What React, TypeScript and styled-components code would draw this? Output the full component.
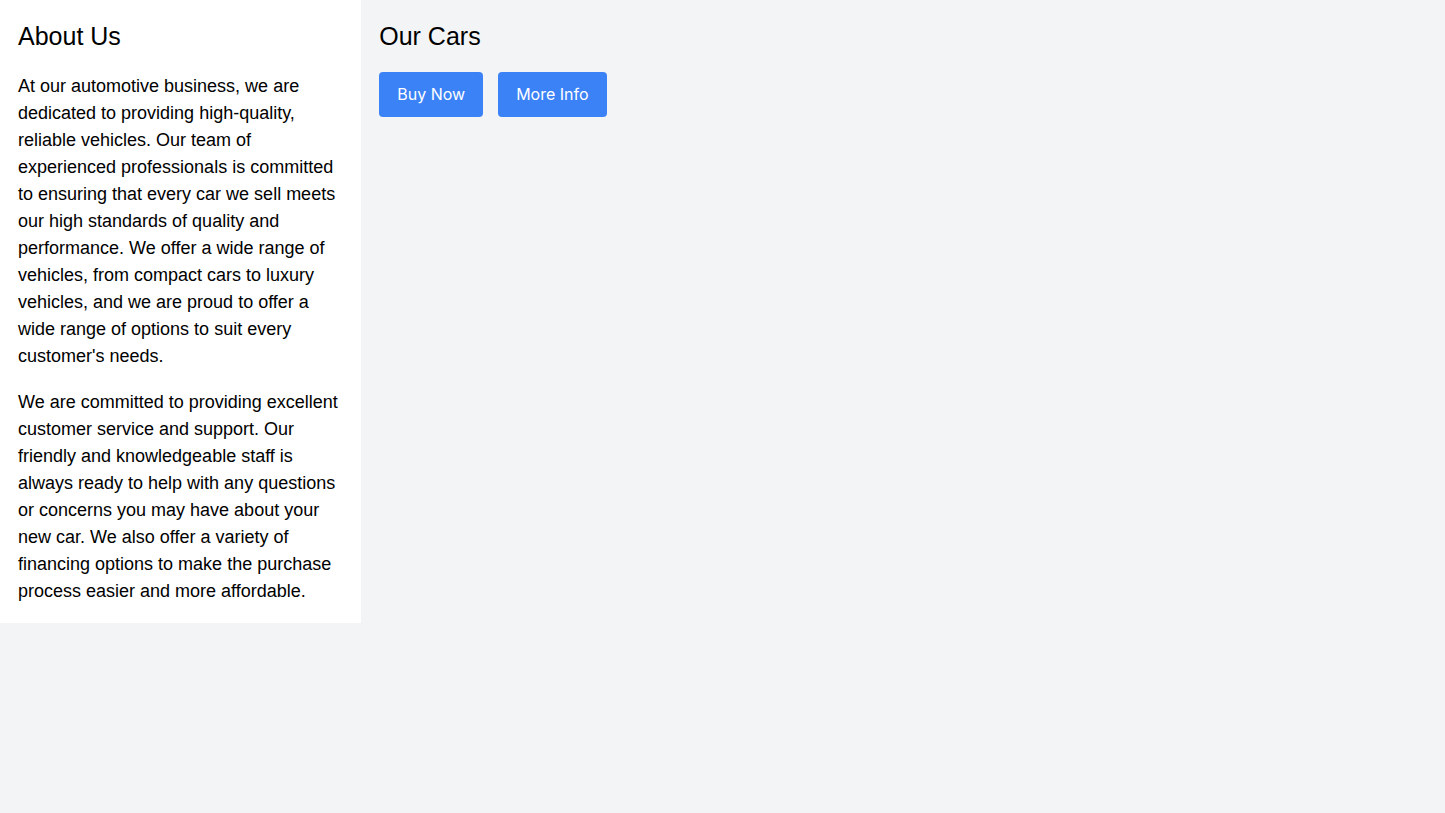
import React from "react";
import styled, { createGlobalStyle } from "styled-components";

const Global = createGlobalStyle`
  html, body { margin: 0; padding: 0; }
  body {
    background: #f3f4f6;
    font-family: "Liberation Sans", Arial, sans-serif;
    color: #000;
  }
`;

const Page = styled.div`
  display: flex;
  align-items: flex-start;
  min-height: 813px;
  background: #f3f4f6;
`;

const Sidebar = styled.aside`
  width: 25%;
  box-sizing: border-box;
  background: #ffffff;
  padding: 18px;
`;

const Main = styled.main`
  flex: 1;
  padding: 18px;
`;

const Heading = styled.h2`
  margin: 0 0 19px;
  font-size: 25px;
  line-height: 36px;
  font-weight: 400;
`;

const Paragraph = styled.p`
  margin: 0 0 19px;
  font-size: 18px;
  line-height: 27px;
  &:last-child { margin-bottom: 0; }
`;

const ButtonRow = styled.div`
  display: flex;
  gap: 15px;
  margin-top: -1px;
`;

const Button = styled.button`
  background: #3b82f6;
  color: #ffffff;
  border: none;
  border-radius: 4px;
  padding: 9px 18px;
  font-family: Inter, "Liberation Sans", sans-serif;
  font-size: 16px;
  line-height: 27px;
  cursor: pointer;
`;

export default function App() {
  return (
    <Page>
      <Global />
      <Sidebar>
        <Heading>About Us</Heading>
        <Paragraph>
          At our automotive business, we are dedicated to providing high-quality, reliable vehicles. Our team of
          experienced professionals is committed to ensuring that every car we sell meets our high standards of
          quality and performance. We offer a wide range of vehicles, from compact cars to luxury vehicles, and we
          are proud to offer a wide range of options to suit every customer's needs.
        </Paragraph>
        <Paragraph>
          We are committed to providing excellent customer service and support. Our friendly and knowledgeable staff
          is always ready to help with any questions or concerns you may have about your new car. We also offer a
          variety of financing options to make the purchase process easier and more affordable.
        </Paragraph>
      </Sidebar>
      <Main>
        <Heading>Our Cars</Heading>
        <ButtonRow>
          <Button>Buy Now</Button>
          <Button>More Info</Button>
        </ButtonRow>
      </Main>
    </Page>
  );
}
